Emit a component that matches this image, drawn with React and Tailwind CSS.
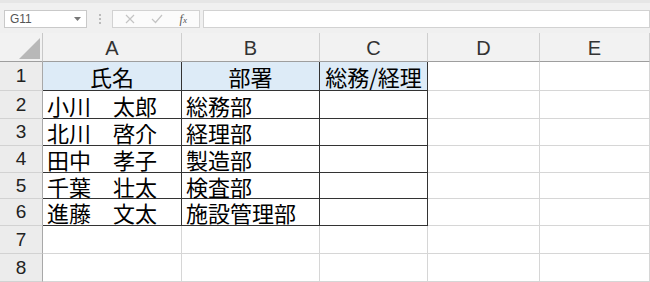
const data = [
  ['小川　太郎', '総務部'],
  ['北川　啓介', '経理部'],
  ['田中　孝子', '製造部'],
  ['千葉　壮太', '検査部'],
  ['進藤　文太', '施設管理部'],
];

const jp = "font-['Noto_Sans_CJK_JP','Noto_Sans_CJK_SC',sans-serif]";
const latin = "font-['Liberation_Sans',Arial,sans-serif]";

function Toolbar() {
  return (
    <div className="h-[33px] bg-[#f0f0f0] border-t-[3px] border-t-[#e6e6e6] flex items-start pt-[7px] pl-[4px]">
      {/* name box */}
      <div className="w-[83px] h-[18px] bg-white border border-[#c9c9c9] flex items-center justify-between px-[5px]">
        <span className={`${latin} text-[12px] text-[#555] leading-none`}>G11</span>
        <svg width="7" height="4" viewBox="0 0 7 4">
          <path d="M0 0h7L3.5 4z" fill="#777" />
        </svg>
      </div>
      <div className="w-[25px] h-[18px] flex flex-col items-center justify-center gap-[2px]">
        <span className="w-[2px] h-[2px] bg-[#bbb]" />
        <span className="w-[2px] h-[2px] bg-[#bbb]" />
        <span className="w-[2px] h-[2px] bg-[#bbb]" />
      </div>
      {/* formula buttons */}
      <div className="w-[88px] h-[18px] bg-[#fbfbfb] border border-[#d2d2d2] flex items-center justify-around px-[4px]">
        <svg width="10" height="10" viewBox="0 0 10 10">
          <path d="M1 1l8 8M9 1l-8 8" stroke="#c4c4c4" strokeWidth="1.2" />
        </svg>
        <svg width="12" height="10" viewBox="0 0 12 10">
          <path d="M1 5l3.5 3.5L11 1" stroke="#c4c4c4" strokeWidth="1.2" fill="none" />
        </svg>
        <span className="font-['Liberation_Serif',serif] italic text-[12px] text-[#555] leading-none">
          f<span className="text-[9px]">x</span>
        </span>
      </div>
      <div className="flex-1 h-[18px] ml-[3px] bg-white border border-[#d2d2d2]" />
    </div>
  );
}

function Corner() {
  return (
    <div className="bg-[#f2f2f2] border-r border-b border-r-[#c8c8c8] border-b-[#9e9e9e] flex items-end justify-end pr-[2px] pb-[2px]">
      <svg width="21" height="21" viewBox="0 0 21 21">
        <path d="M21 0V21H0z" fill="#b8b8b8" />
      </svg>
    </div>
  );
}

function ColHead({ label }) {
  return (
    <div
      className={`${latin} bg-[#f2f2f2] border-r border-b border-r-[#cfcfcf] border-b-[#9e9e9e] flex items-end justify-center pb-[2px] text-[20px] text-[#333] leading-[22px]`}
    >
      {label}
    </div>
  );
}

function RowHead({ n }) {
  return (
    <div
      className={`${latin} bg-[#ececec] border-r border-b border-r-[#a8a8a8] border-b-[#d2d2d2] flex items-center justify-center text-[19px] text-[#222] leading-[22px]`}
    >
      {n}
    </div>
  );
}

function Cell({ children, table, blue, center }) {
  return (
    <div
      className={[
        jp,
        'border-r border-b flex items-center text-[22px] text-black leading-[24px] whitespace-nowrap',
        table ? 'border-[#333]' : 'border-[#d6d6d6]',
        blue ? 'bg-[#ddebf7]' : 'bg-white',
        center ? 'justify-center' : 'pl-[4px]',
      ].join(' ')}
    >
      {children}
    </div>
  );
}

export default function App() {
  return (
    <div className="w-[650px] h-[282px] overflow-hidden bg-white">
      <Toolbar />
      <div className="grid grid-cols-[43px_139px_138px_108px_112px_1fr] grid-rows-[29px_29px_28px_27px_27px_26px_27px_28px_28px]">
        <Corner />
        {['A', 'B', 'C', 'D', 'E'].map((c) => (
          <ColHead key={c} label={c} />
        ))}

        <RowHead n={1} />
        <Cell table blue center>氏名</Cell>
        <Cell table blue center>部署</Cell>
        <Cell table blue center>総務/経理</Cell>
        <Cell />
        <Cell />

        {data.map((r, i) => (
          <div key={i} className="contents">
            <RowHead n={i + 2} />
            <Cell table>{r[0]}</Cell>
            <Cell table>{r[1]}</Cell>
            <Cell table />
            <Cell />
            <Cell />
          </div>
        ))}

        {[7, 8].map((n) => (
          <div key={n} className="contents">
            <RowHead n={n} />
            <Cell />
            <Cell />
            <Cell />
            <Cell />
            <Cell />
          </div>
        ))}
      </div>
    </div>
  );
}
